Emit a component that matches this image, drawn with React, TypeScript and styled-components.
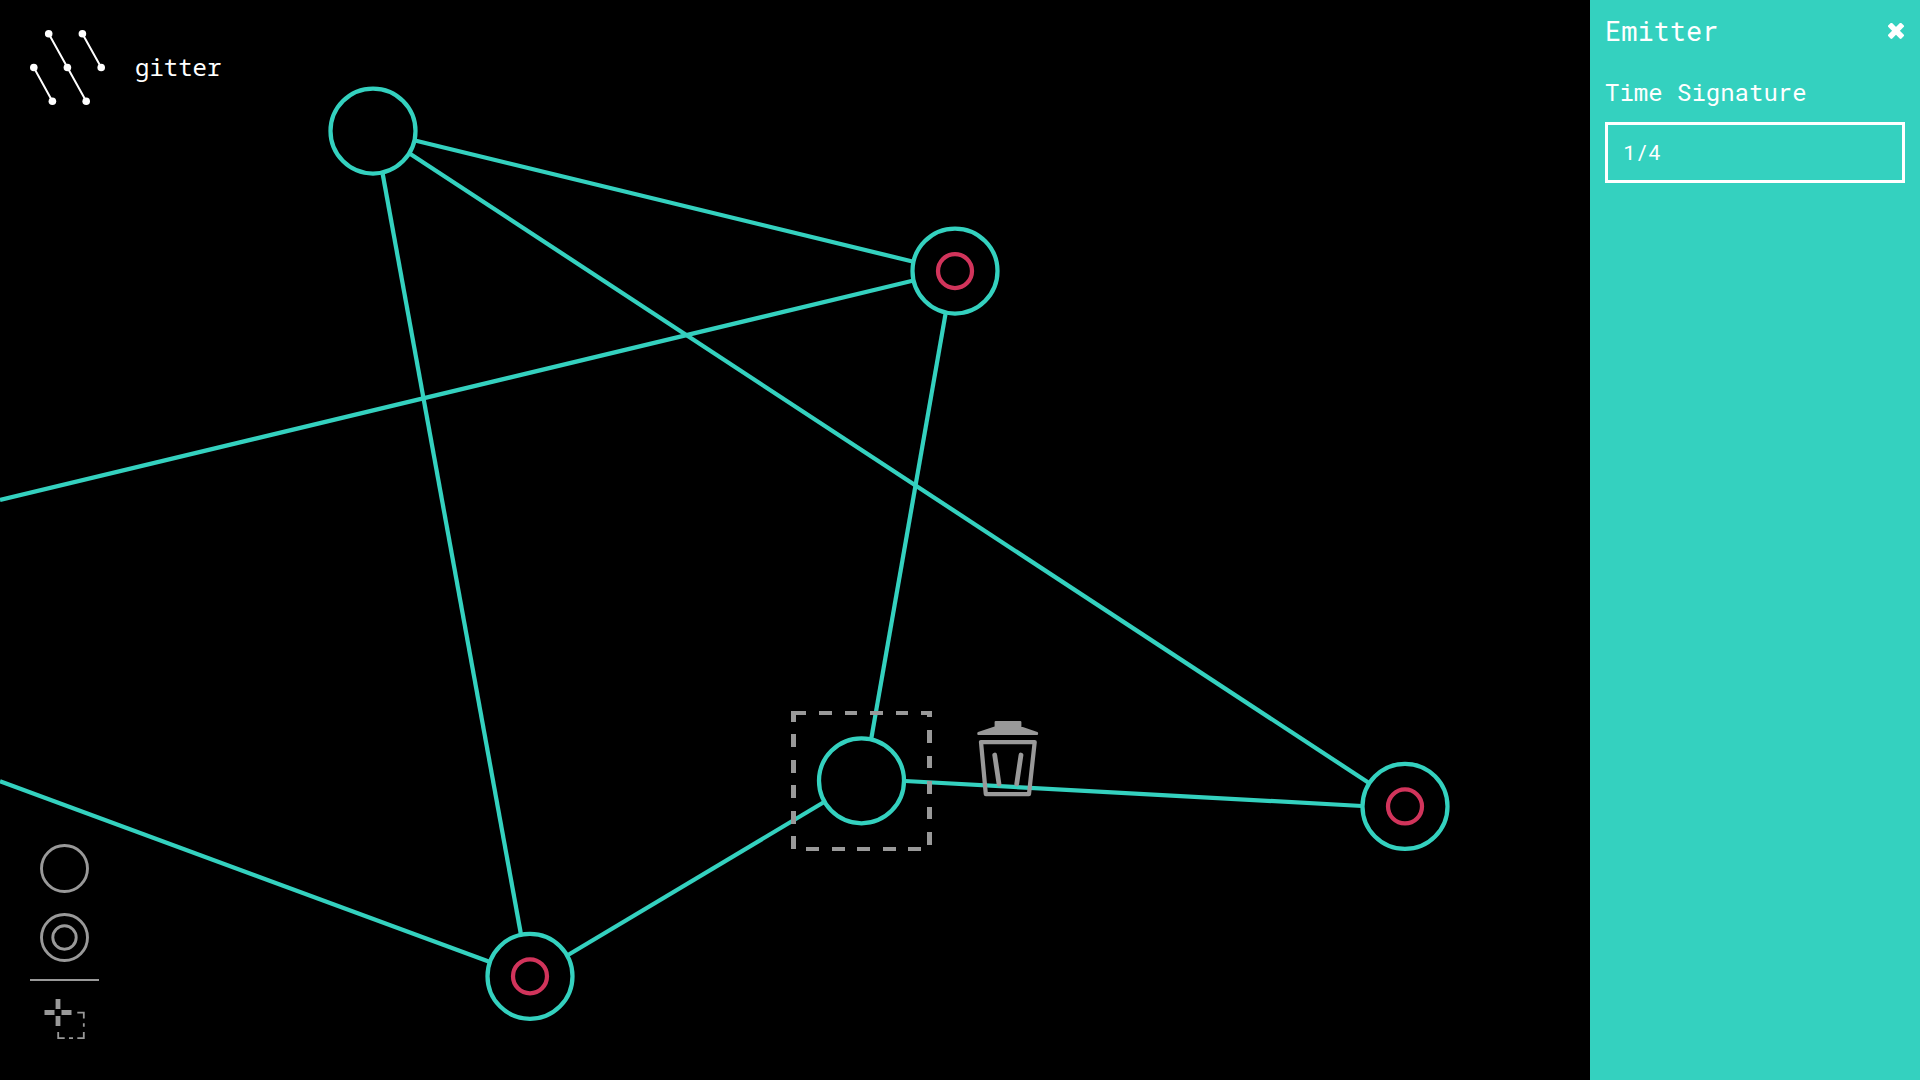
import React, { useState } from "react";
import styled, { createGlobalStyle } from "styled-components";

const teal = "#34d1bf";
const red = "#d1345b";
const grey = "#999";

const GlobalStyle = createGlobalStyle`
  * { box-sizing: border-box; }
  body {
    margin: 0;
    background: #000;
    color: #fff;
    font-family: "Roboto Mono", "DejaVu Sans Mono", monospace;
  }
`;

const Layout = styled.div`
  display: grid;
  grid-template-columns: minmax(0, 1fr) 330px;
  min-height: 100vh;
`;

const Stage = styled.main`
  position: relative;
  display: flex;
  flex-direction: column;
  justify-content: space-between;
  align-items: flex-start;
  padding: 30px;
  overflow: hidden;
`;

const Graph = styled.svg`
  position: absolute;
  inset: 0;
  width: 100%;
  height: 100%;
`;

const Edge = styled.line`
  stroke: ${teal};
  stroke-width: 4.25;
`;

const Ring = styled.circle<{ $color: string }>`
  fill: #000;
  stroke: ${(p) => p.$color};
  stroke-width: 4.25;
`;

const Selection = styled.path`
  fill: none;
  stroke: ${grey};
  stroke-width: 1;
  stroke-dasharray: 3 3;
  shape-rendering: crispEdges;
`;

const Brand = styled.header`
  position: relative;
  display: flex;
  align-items: center;
  gap: 30px;
`;

const BrandName = styled.h1`
  margin: 0;
  padding-bottom: 2px;
  font: 400 24px/32px "Noto Sans Mono", "DejaVu Sans Mono", monospace;
`;

const Toolbar = styled.nav`
  position: relative;
  display: flex;
  flex-direction: column;
  width: 69px;
`;

const IconButton = styled.button`
  display: grid;
  place-items: center;
  padding: 0;
  border: 0;
  background: none;
  color: inherit;
  cursor: pointer;
`;

const Tool = styled(IconButton)<{ $height?: number }>`
  height: ${(p) => p.$height ?? 69}px;
`;

const Divider = styled.hr`
  width: 100%;
  height: 2px;
  margin: 7px 0;
  border: 0;
  background: ${grey};
`;

const DeleteButton = styled(IconButton)`
  position: absolute;
  left: 975px;
  top: 719px;
`;

const Panel = styled.aside`
  padding: 15px;
  background: ${teal};
`;

const PanelHeader = styled.div`
  display: flex;
  align-items: center;
  justify-content: space-between;
  height: 32px;
`;

const PanelTitle = styled.h2`
  margin: 0;
  font-size: 27px;
  font-weight: 400;
  line-height: 32px;
`;

const Field = styled.div`
  display: flex;
  flex-direction: column;
  gap: 14px;
  margin-top: 29px;
`;

const Label = styled.label`
  font-size: 24px;
  line-height: 32px;
`;

const Select = styled.select`
  width: 100%;
  height: 61px;
  padding: 0 15px 2px;
  border: 3px solid #fff;
  border-radius: 0;
  background: transparent;
  color: #fff;
  font: inherit;
  font-size: 21px;
  appearance: none;

  option { color: #000; }
`;

type GraphNode = { x: number; y: number; receiver?: boolean };

const nodes: GraphNode[] = [
  { x: 373, y: 131 },
  { x: 955, y: 271, receiver: true },
  { x: 1405, y: 806.4, receiver: true },
  { x: 530, y: 976.3, receiver: true },
  { x: 861.5, y: 780.8 },
];

const edges = [
  [415, 140.5, 912.5, 261.5],
  [410, 153.7, 1369, 783],
  [382.7, 174, 520.8, 933.5],
  [945.5, 314, 871.3, 738.5],
  [905, 781, 1362, 806],
  [568, 955, 823.7, 802.3],
  [0, 500, 912.5, 280.8],
  [0, 781.3, 490, 962],
];

const logoDots = [
  [18.7, 3.8], [52.4, 3.8], [3.8, 37.5], [37.4, 37.5], [71.2, 37.5], [22.4, 71.2], [56.2, 71.2],
];

function Logo() {
  return (
    <svg width="75" height="75" viewBox="0 0 75 75" aria-hidden="true">
      <path d="M18.7 3.8 56.2 71.2M52.4 3.8 71.2 37.5M3.8 37.5 22.4 71.2" stroke="#fff" strokeWidth="2" />
      {logoDots.map(([x, y]) => (
        <circle key={`${x}-${y}`} cx={x} cy={y} r="3.8" fill="#fff" />
      ))}
    </svg>
  );
}

function CircleIcon({ inner = false }: { inner?: boolean }) {
  return (
    <svg width="49" height="49" viewBox="0 0 49 49" fill="none" stroke={grey} strokeWidth="2.9" aria-hidden="true">
      <circle cx="24.5" cy="24.5" r="23" />
      {inner && <circle cx="24.5" cy="24.5" r="11.7" />}
    </svg>
  );
}

function MoveIcon() {
  return (
    <svg width="41" height="42" viewBox="0 0 41 42" fill="none" stroke={grey} aria-hidden="true">
      <path d="M14 1v10M14 18v10M0.5 14.5h10M17.5 14.5h10" strokeWidth="4.8" />
      <path
        d="M33.3 14.6H39.8v6M39.8 25.3v3.4M39.8 34v6.2H33.3M29 40.2h-4M20.7 40.2H14.2V34"
        strokeWidth="1.8"
      />
    </svg>
  );
}

function TrashIcon() {
  return (
    <svg width="66" height="80" viewBox="0 0 66 80" fill="none" stroke={grey} aria-hidden="true">
      <path d="M20.7 3h24.6v5.2L62 14v1H3.4v-1L20.7 8.2Z" fill={grey} strokeWidth="2.2" strokeLinejoin="round" />
      <path d="M6 23h53.7L54 75H10.8Z" strokeWidth="4.25" strokeLinejoin="round" />
      <path d="M19.7 36 24 65M46 36 41.7 65" strokeWidth="4.8" strokeLinecap="round" />
    </svg>
  );
}

function CloseIcon() {
  return (
    <svg width="17" height="17" viewBox="0 0 17 17" fill="#fff" aria-hidden="true">
      <g transform="translate(8 7.8) rotate(45)">
        <rect x="-9.3" y="-2.8" width="18.6" height="5.6" rx="1.3" />
        <rect x="-2.8" y="-9.3" width="5.6" height="18.6" rx="1.3" />
      </g>
    </svg>
  );
}

export default function App() {
  const [signature, setSignature] = useState("1/4");

  return (
    <>
      <GlobalStyle />
      <Layout>
        <Stage>
          <Graph aria-label="Node graph">
            {nodes.map(({ x, y, receiver }) => (
              <g key={`${x}-${y}`}>
                <Ring cx={x} cy={y} r={42.5} $color={teal} />
                {receiver && <Ring cx={x} cy={y} r={17} $color={red} />}
              </g>
            ))}
            {edges.map(([x1, y1, x2, y2], i) => (
              <Edge key={i} x1={x1} y1={y1} x2={x2} y2={y2} />
            ))}
            <g transform="translate(793.5 713) scale(4.25)">
              <Selection d="M0 0H32V32H0Z" />
            </g>
          </Graph>
          <Brand>
            <Logo />
            <BrandName>gitter</BrandName>
          </Brand>
          <Toolbar aria-label="Tools">
            <Tool type="button" aria-label="Add emitter"><CircleIcon /></Tool>
            <Tool type="button" aria-label="Add receiver"><CircleIcon inner /></Tool>
            <Divider />
            <Tool type="button" aria-label="Select and move" $height={62}><MoveIcon /></Tool>
          </Toolbar>
          <DeleteButton type="button" aria-label="Delete node"><TrashIcon /></DeleteButton>
        </Stage>
        <Panel>
          <PanelHeader>
            <PanelTitle>Emitter</PanelTitle>
            <IconButton type="button" aria-label="Close"><CloseIcon /></IconButton>
          </PanelHeader>
          <Field>
            <Label htmlFor="signature">Time Signature</Label>
            <Select id="signature" value={signature} onChange={(e) => setSignature(e.target.value)}>
              <option>1/4</option>
              <option>1/8</option>
              <option>1/16</option>
            </Select>
          </Field>
        </Panel>
      </Layout>
    </>
  );
}
